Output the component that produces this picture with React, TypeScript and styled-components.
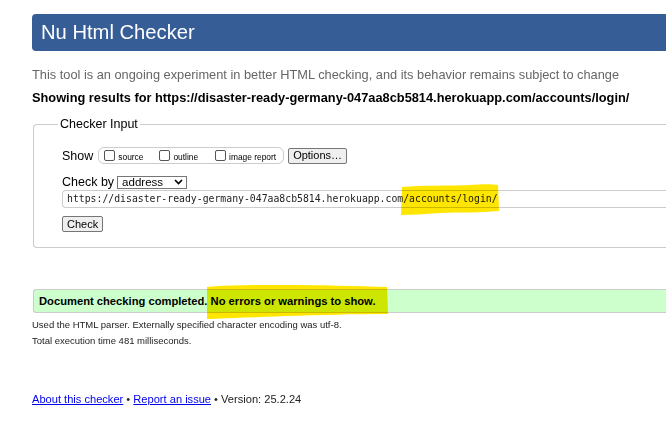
import React from 'react';
import styled, { createGlobalStyle } from 'styled-components';

const Global = createGlobalStyle`
  html, body { margin: 0; padding: 0; background: #fff; overflow: hidden; }
  body { font-family: "Liberation Sans", Arial, sans-serif; color: #000; }
`;

const Page = styled.div`
  padding: 14px 0 0 32px;
  margin-right: -40px;
`;

const Header = styled.h1`
  margin: 0;
  height: 37px;
  background: #365d95;
  border-radius: 4px;
  color: #fff;
  font-size: 20.2px;
  font-weight: normal;
  line-height: 37px;
  padding-left: 9px;
`;

const Intro = styled.p`
  margin: 16px 0 0;
  font-size: 12.8px;
  line-height: 16px;
  color: #666;
`;

const Showing = styled.p`
  margin: 7px 0 0;
  font-size: 12.8px;
  line-height: 16px;
  font-weight: bold;
`;

const Fieldset = styled.fieldset`
  margin: 11px 0 0 1px;
  border: 1px solid #ccc;
  border-right: none;
  border-radius: 4px 0 0 4px;
  padding: 0 0 15px 28px;
  display: flex;
  flex-direction: column;
  align-items: flex-start;
`;

const Legend = styled.legend`
  margin-left: -4px;
  padding: 0 2px;
  font-size: 12.5px;
  line-height: 15px;
`;

const Row = styled.div<{ $top: number }>`
  display: flex;
  align-items: center;
  font-size: 12.5px;
  margin-top: ${(p) => p.$top}px;
`;

const Group = styled.div`
  display: flex;
  align-items: center;
  margin-left: 5px;
  height: 15px;
  border: 1px solid #ccc;
  border-radius: 6px;
  padding: 0 7px 0 5px;
`;

const CheckLabel = styled.label<{ $gap?: number }>`
  display: flex;
  align-items: center;
  gap: 3px;
  font-size: 8.4px;
  line-height: 12px;
  padding-top: 2px;
  margin-left: ${(p) => p.$gap ?? 0}px;
`;

const Box = styled.input`
  appearance: none;
  width: 11px;
  height: 11px;
  margin: -3px 0 0;
  border: 1px solid #555;
  border-radius: 2px;
  background: #fff;
`;

const Button = styled.button<{ $ml?: number; $mt?: number }>`
  font-family: "Liberation Sans", Arial, sans-serif;
  font-size: 11px;
  line-height: 13px;
  color: #000;
  background: #efefef;
  border: 1px solid #767676;
  border-radius: 2px;
  padding: 0 4px;
  height: 16px;
  margin-left: ${(p) => p.$ml ?? 0}px;
  margin-top: ${(p) => p.$mt ?? 0}px;
`;

const Select = styled.div`
  display: flex;
  align-items: center;
  justify-content: space-between;
  width: 70px;
  height: 13px;
  box-sizing: border-box;
  margin-left: 3px;
  border: 1px solid #767676;
  padding: 0 3px 0 4px;
  font-size: 11.5px;
  line-height: 12px;
`;

const UrlWrap = styled.div`
  position: relative;
  align-self: stretch;
  margin-top: 1px;
`;

const UrlInput = styled.div`
  height: 18px;
  box-sizing: border-box;
  border: 1px solid #ccc;
  border-right: none;
  border-radius: 4px 0 0 4px;
  padding-left: 4px;
  font-family: "DejaVu Sans Mono", "Liberation Mono", monospace;
  font-size: 9.8px;
  line-height: 16px;
  color: #222;
  white-space: nowrap;
`;

const Mark = styled.svg`
  position: absolute;
  mix-blend-mode: multiply;
  pointer-events: none;
`;

const Status = styled.div`
  position: relative;
  margin: 41px 0 0 1px;
  height: 24px;
  box-sizing: border-box;
  border: 1px solid #ccc;
  border-right: none;
  border-radius: 3px 0 0 3px;
  background: #ccffcc;
  padding-left: 5px;
  font-size: 11.2px;
  font-weight: bold;
  line-height: 22px;
`;

const Note = styled.p<{ $top: number }>`
  margin: ${(p) => p.$top}px 0 0;
  font-size: 9.5px;
  line-height: 16px;
  color: #222;
`;

const Footer = styled.p`
  margin: 42px 0 0;
  font-size: 11.1px;
  line-height: 16px;
  color: #222;
`;

const Link = styled.a`
  color: #0000ee;
  text-decoration: underline;
`;

export default function App() {
  return (
    <>
      <Global />
      <Page>
        <Header>Nu Html Checker</Header>
        <Intro>This tool is an ongoing experiment in better HTML checking, and its behavior remains subject to change</Intro>
        <Showing>Showing results for https://disaster-ready-germany-047aa8cb5814.herokuapp.com/accounts/login/</Showing>
        <Fieldset>
          <Legend>Checker Input</Legend>
          <Row $top={15}>
            <span>Show</span>
            <Group>
              <CheckLabel><Box type="checkbox" />source</CheckLabel>
              <CheckLabel $gap={16}><Box type="checkbox" />outline</CheckLabel>
              <CheckLabel $gap={17}><Box type="checkbox" />image report</CheckLabel>
            </Group>
            <Button $ml={4}>Options…</Button>
          </Row>
          <Row $top={11}>
            <span>Check by</span>
            <Select>
              <span>address</span>
              <svg width="9" height="6" viewBox="0 0 9 6">
                <path d="M1 1 L4.5 4.5 L8 1" fill="none" stroke="#000" strokeWidth="1.7" />
              </svg>
            </Select>
          </Row>
          <UrlWrap>
            <UrlInput>https://disaster-ready-germany-047aa8cb5814.herokuapp.com/accounts/login/</UrlInput>
            <Mark style={{ left: 338, top: -6 }} width="101" height="32" viewBox="0 0 101 32">
              <path d="M2 3 C20 1 50 2 70 1 C82 0 92 0 98 1 L99 27 C80 29 60 28 40 29 C25 30 12 31 1 31 Z" fill="#ffe600" />
            </Mark>
          </UrlWrap>
          <Button $mt={8}>Check</Button>
        </Fieldset>
        <Status>
          Document checking completed. No errors or warnings to show.
          <Mark style={{ left: 173, top: -5 }} width="183" height="36" viewBox="0 0 183 36">
            <path d="M0 2 C20 0 50 0 80 0 C110 0 150 1 180 2 L181 29 C150 29 110 30 80 31 C50 32 25 33 0 34 Z" fill="#ffe600" />
          </Mark>
        </Status>
        <Note $top={4}>Used the HTML parser. Externally specified character encoding was utf-8.</Note>
        <Note $top={0}>Total execution time 481 milliseconds.</Note>
        <Footer>
          <Link href="#">About this checker</Link> • <Link href="#">Report an issue</Link> • Version: 25.2.24
        </Footer>
      </Page>
    </>
  );
}
